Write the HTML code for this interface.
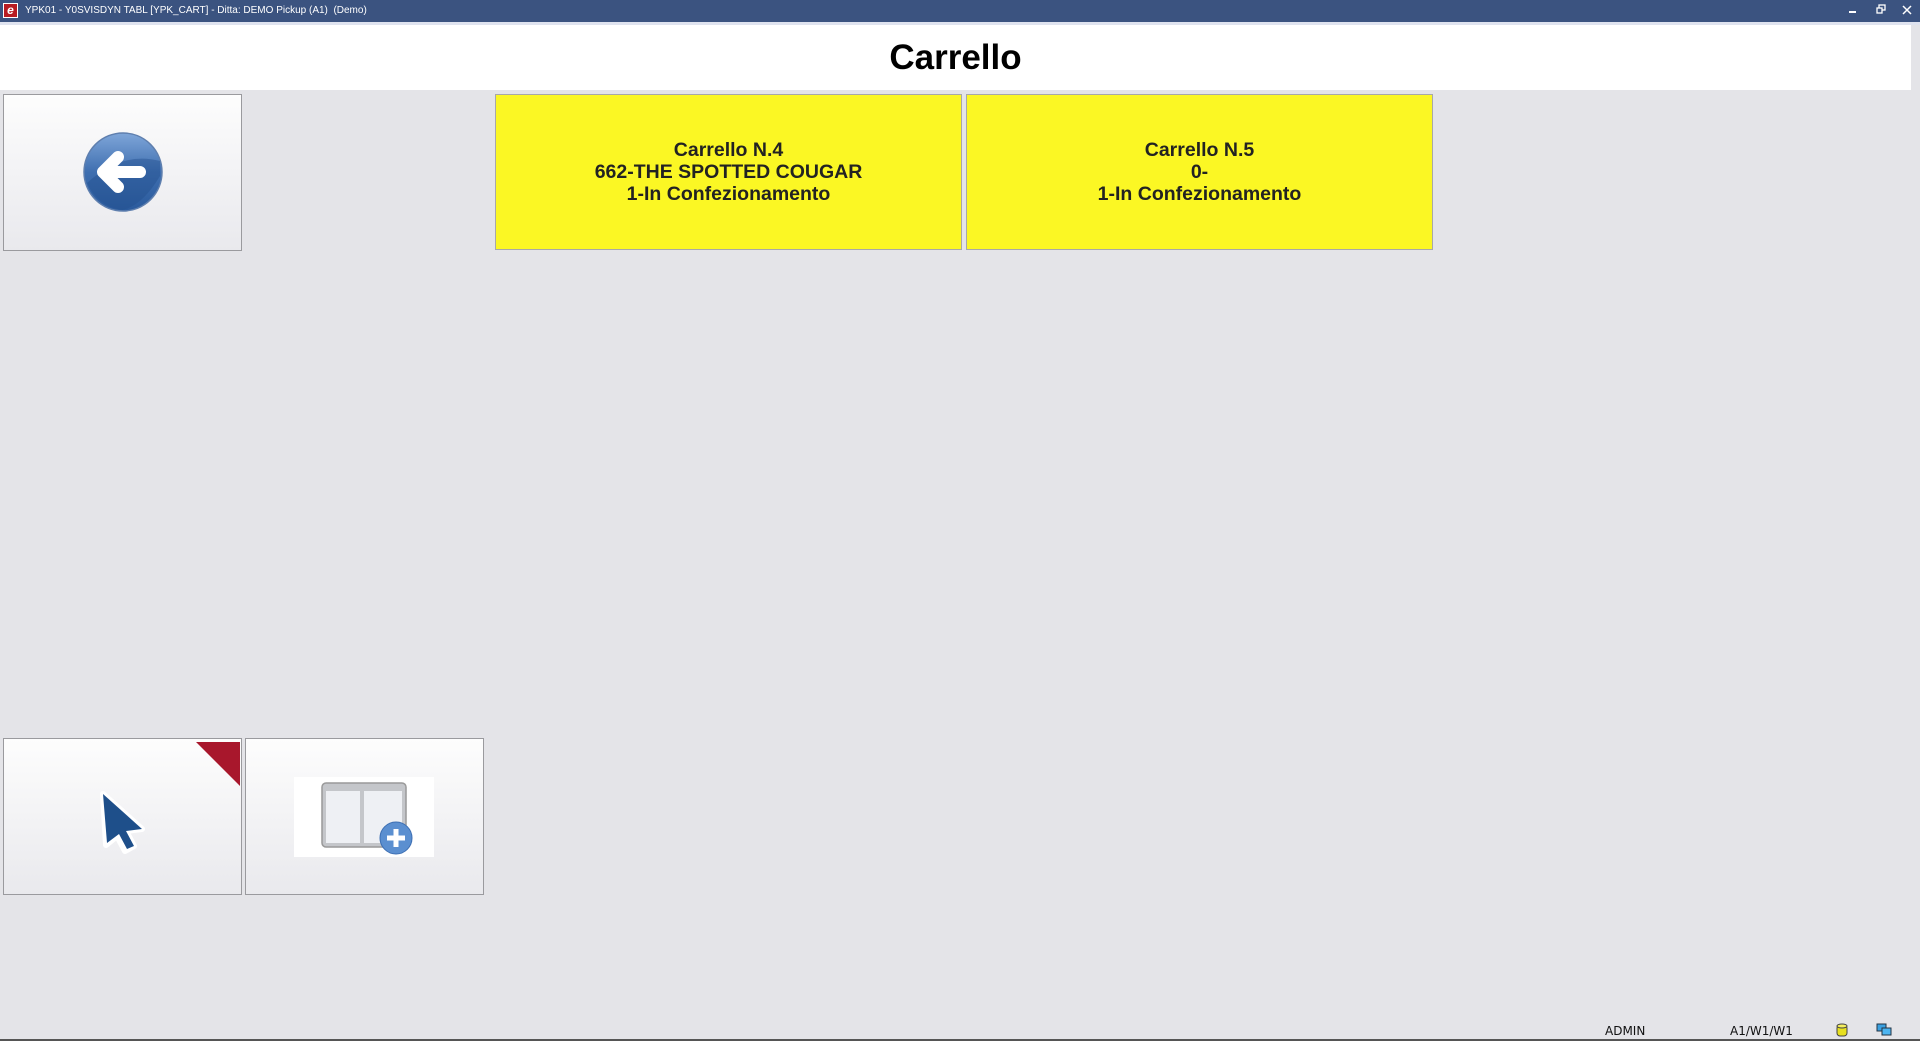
<!DOCTYPE html>
<html><head><meta charset="utf-8">
<style>
*{margin:0;padding:0;box-sizing:border-box}
body{width:1920px;height:1041px;overflow:hidden;background:#e4e4e8;font-family:"Liberation Sans",sans-serif;position:relative}
.tb{position:absolute;left:0;top:0;width:1920px;height:22px;background:#3b5380;color:#fff;font-size:10px;line-height:22px}
.strip{position:absolute;left:0;top:22px;width:1920px;height:3px;background:#dfe3ef}
.hdr{position:absolute;left:0;top:25px;width:1911px;height:65px;background:#fff;text-align:center;font-weight:bold;font-size:35px;line-height:66px;color:#000}
.btn{position:absolute;border:1px solid #9a9a9e;background:linear-gradient(#fdfdfd,#e9e9ed)}
.card{position:absolute;top:94px;height:156px;border:1px solid #a8a8a8;background:#fbf724;display:flex;align-items:center;justify-content:center;text-align:center;font-weight:bold;font-size:19.5px;line-height:22px;color:#222}
.st{position:absolute;top:1024px;font-size:12px;color:#111;font-family:"DejaVu Sans","Liberation Sans",sans-serif}
</style></head><body>
<div class="tb">
 <div style="position:absolute;left:3px;top:3px;width:15px;height:15px;background:#b81c22;border:1px solid #fff;color:#fff;font-size:12px;line-height:13px;text-align:center;font-style:italic;font-weight:bold">e</div>
 <span style="position:absolute;left:25px">YPK01 - Y0SVISDYN TABL [YPK_CART] - Ditta: DEMO Pickup (A1)&nbsp; (Demo)</span>
 <div style="position:absolute;left:1849px;top:11px;width:7px;height:2px;background:#fff"></div>
 <svg style="position:absolute;left:1876px;top:4px" width="10" height="10"><rect x="3" y="1" width="6" height="5" fill="none" stroke="#fff" stroke-width="1.3"/><rect x="1" y="4" width="5" height="5" fill="#3b5380" stroke="#fff" stroke-width="1.3"/></svg>
 <svg style="position:absolute;left:1902px;top:5px" width="10" height="10"><path d="M1 1L9 9M9 1L1 9" stroke="#fff" stroke-width="1.5"/></svg>
</div>
<div class="strip"></div>
<div class="hdr">Carrello</div>

<div class="btn" style="left:3px;top:94px;width:239px;height:157px">
 <svg style="position:absolute;left:78px;top:36px" width="82" height="82" viewBox="0 0 82 82">
  <defs><linearGradient id="g" x1="0" y1="0" x2="0" y2="1"><stop offset="0" stop-color="#7fa6d9"/><stop offset="0.5" stop-color="#3f6fb0"/><stop offset="1" stop-color="#2a5a9c"/></linearGradient></defs>
  <circle cx="41" cy="41" r="39" fill="url(#g)" stroke="#5f7fae" stroke-width="1.5"/>
  <path d="M5 52 Q40 20 78 30 L78 45 Q60 75 40 79 Q15 75 5 52Z" fill="#244f8e" opacity="0.45"/>
  <path d="M58 41 H22 M36 26 L21 41 L36 56" fill="none" stroke="#fff" stroke-width="12" stroke-linecap="round" stroke-linejoin="round"/>
 </svg>
</div>

<div class="card" style="left:495px;width:467px">Carrello N.4<br>662-THE SPOTTED COUGAR<br>1-In Confezionamento</div>
<div class="card" style="left:966px;width:467px">Carrello N.5<br>0-<br>1-In Confezionamento</div>

<div class="btn" style="left:3px;top:738px;width:239px;height:157px">
 <svg style="position:absolute;left:192px;top:3px" width="44" height="44"><path d="M0 0H44V44Z" fill="#a8172c"/></svg>
 <svg style="position:absolute;left:92px;top:48px" width="60" height="70" viewBox="0 0 60 70">
  <path d="M7 7 L46 42 L30 44 L38 59 L29 64 L21 49 L10 58Z" fill="#fff" stroke="#fff" stroke-width="6" stroke-linejoin="round"/>
  <path d="M7 7 L46 42 L30 44 L38 59 L31 62 L23 47 L11 56Z" fill="#1e4f8a"/>
 </svg>
</div>
<div class="btn" style="left:245px;top:738px;width:239px;height:157px">
 <div style="position:absolute;left:48px;top:38px;width:140px;height:80px;background:#fff"></div>
 <svg style="position:absolute;left:74px;top:42px" width="96" height="76" viewBox="0 0 96 76">
  <rect x="2" y="2" width="84" height="64" rx="4" fill="#c4c6ca" stroke="#999" stroke-width="1.5"/>
  <rect x="6" y="10" width="34" height="52" fill="#eef0f4"/>
  <rect x="44" y="10" width="38" height="52" fill="#eef0f4"/>
  <circle cx="76" cy="57" r="16" fill="#5b8fd0" stroke="#3d6fb3"/>
  <path d="M76 48V66M67 57H85" stroke="#fff" stroke-width="5"/>
 </svg>
</div>

<div class="st" style="left:1605px">ADMIN</div>
<div class="st" style="left:1730px">A1/W1/W1</div>
<svg style="position:absolute;left:1836px;top:1023px" width="12" height="14"><rect x="1" y="2" width="10" height="11" rx="3" fill="#e8e020" stroke="#444"/><ellipse cx="6" cy="3" rx="5" ry="2" fill="#f4ee60" stroke="#444"/></svg>
<svg style="position:absolute;left:1876px;top:1023px" width="16" height="14"><rect x="1" y="1" width="9" height="7" fill="#3aa0e0" stroke="#234"/><rect x="6" y="5" width="9" height="7" fill="#4cb4f0" stroke="#234"/></svg>
<div style="position:absolute;left:0;top:1039px;width:1920px;height:2px;background:#555"></div>
</body></html>
